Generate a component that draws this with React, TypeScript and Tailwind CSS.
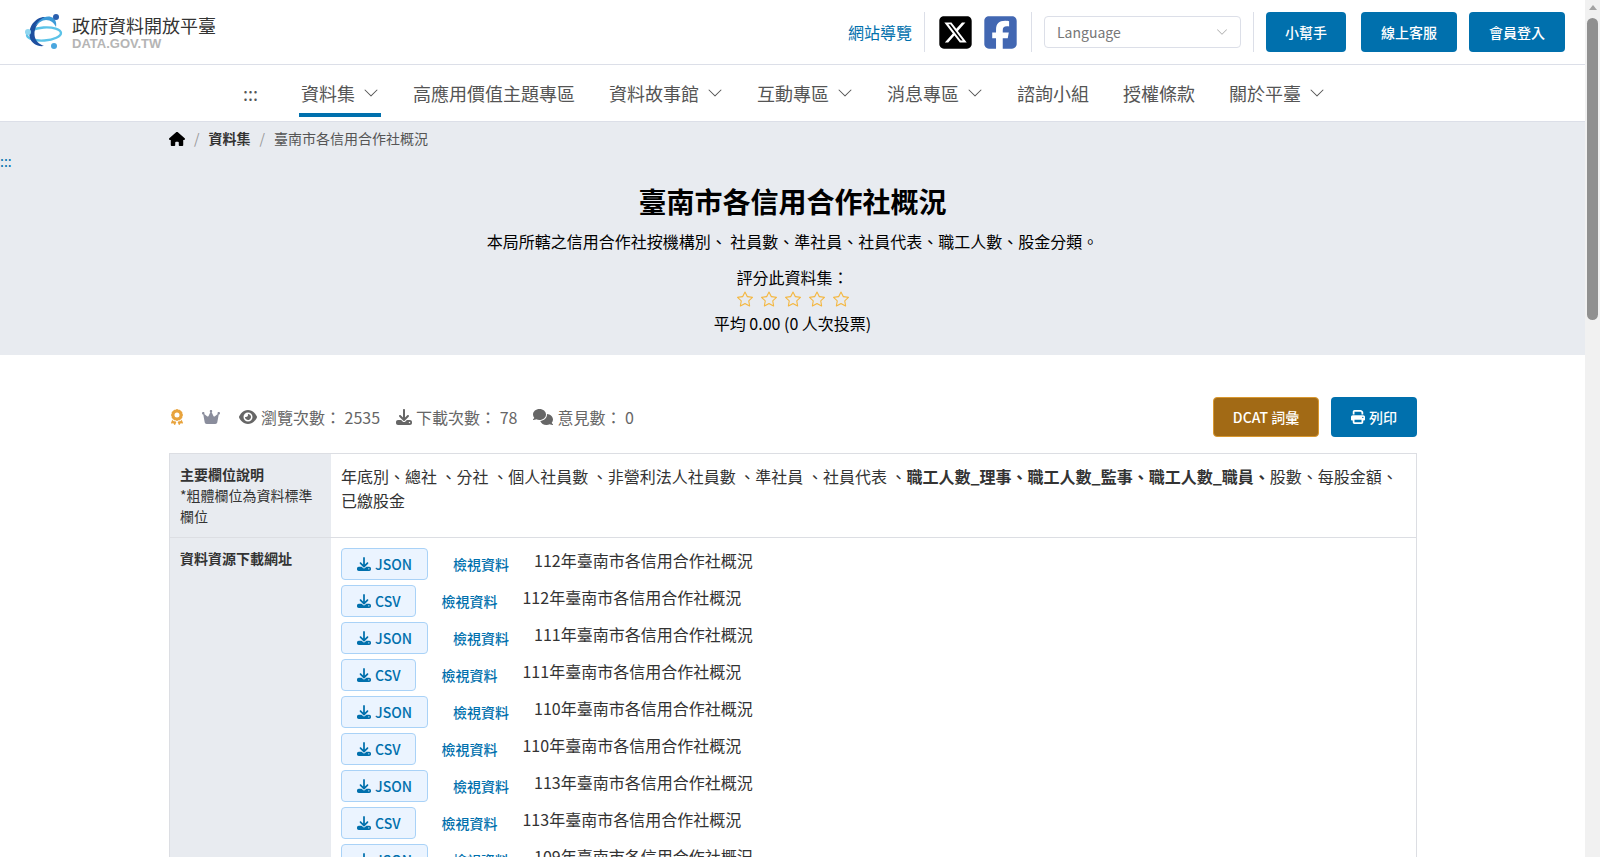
import { BsChevronDown, BsStar } from "react-icons/bs";
import {
  FaAward,
  FaCrown,
  FaDownload,
  FaEye,
  FaHouse,
  FaPrint,
  FaComments,
  FaSquareFacebook,
  FaSquareXTwitter,
} from "react-icons/fa6";

const navItems = [
  { label: "資料集", drop: true, active: true },
  { label: "高應用價值主題專區", drop: false },
  { label: "資料故事館", drop: true },
  { label: "互動專區", drop: true },
  { label: "消息專區", drop: true },
  { label: "諮詢小組", drop: false },
  { label: "授權條款", drop: false },
  { label: "關於平臺", drop: true },
];

const resources = [
  ["JSON", "112"],
  ["CSV", "112"],
  ["JSON", "111"],
  ["CSV", "111"],
  ["JSON", "110"],
  ["CSV", "110"],
  ["JSON", "113"],
  ["CSV", "113"],
  ["JSON", "109"],
];

function Logo() {
  return (
    <svg width="40" height="38" viewBox="0 0 40 38" className="shrink-0">
      <ellipse cx="20" cy="21" rx="17" ry="6.5" fill="none" stroke="#5cc3e8" strokeWidth="2.4" transform="rotate(-4 20 21)" />
      <path d="M22 4C12 3 3 14 6 25c1.500 5 7 9 14 8-5-2-9-5-9.500-11C10 14 15 8 22 4Z" fill="#1d4f9f" />
      <path d="M11 14C14 7 21 2 27 4c4 1 6 5 5 10-2-4-5-7-10-7-4 0-8 3-11 7Z" fill="#3d9bd8" />
      <circle cx="32" cy="4" r="3" fill="#2b5fae" />
      <circle cx="4" cy="19" r="3" fill="#8fd6f0" />
      <circle cx="30" cy="33" r="3" fill="#4aa6de" />
    </svg>
  );
}

function Header() {
  return (
    <header className="flex h-[65px] items-center justify-between border-b border-[#dcdfe8] pl-6 pr-5">
      <div className="flex items-center gap-2">
        <Logo />
        <div>
          <div className="text-[18px] leading-[22px] text-[#333]">政府資料開放平臺</div>
          <div className="font-['Liberation_Sans',sans-serif] text-[13px] leading-[15px] font-bold text-[#b5b5b5]">DATA.GOV.TW</div>
        </div>
      </div>
      <div className="flex items-center">
        <a className="text-[#0070ad]">網站導覽</a>
        <div className="ml-3 h-10 w-px bg-[#dcdfe8]" />
        <FaSquareXTwitter className="ml-3 size-[37px] text-black" />
        <FaSquareFacebook className="ml-[8px] size-[37px] text-[#4267b2]" />
        <div className="ml-3 h-10 w-px bg-[#dcdfe8]" />
        <div className="ml-3 flex h-8 w-[197px] items-center justify-between rounded border border-[#dcdfe8] pl-3 pr-3 text-[#777]">
          <span className="text-[14px]">Language</span>
          <BsChevronDown className="size-3 text-[#aaa]" />
        </div>
        <div className="ml-3 h-10 w-px bg-[#dcdfe8]" />
        <div className="ml-3 flex gap-3 text-[14px] font-medium text-white">
          <button className="h-10 w-20 rounded bg-[#0070ad]">小幫手</button>
          <button className="ml-[3px] h-10 w-24 rounded bg-[#0070ad]">線上客服</button>
          <button className="h-10 w-24 rounded bg-[#0070ad]">會員登入</button>
        </div>
      </div>
    </header>
  );
}

function Nav() {
  return (
    <nav className="flex h-[57px] items-center justify-center border-b border-[#dcdfe8] text-[18px] text-[#555]">
      <span className="mr-[26px] text-[#555]">:::</span>
      {navItems.map((item) => (
        <a key={item.label} className="relative mx-[17px] flex h-full items-center">
          {item.label}
          {item.drop && <BsChevronDown className="ml-2 size-4" />}
          {item.active && <span className="absolute -left-0.5 -right-0.5 bottom-1 h-1 bg-[#0070ad]" />}
        </a>
      ))}
    </nav>
  );
}

function Banner() {
  return (
    <section className="h-[233px] bg-[#e8ebf0]">
      <div className="flex items-center gap-[9px] pl-[169px] pt-[6px] text-[14px] leading-[21px] text-[#555]">
        <FaHouse className="size-4 text-black" />
        <span className="text-[#999]">/</span>
        <b className="text-[#333]">資料集</b>
        <span className="text-[#999]">/</span>
        <span>臺南市各信用合作社概況</span>
      </div>
      <div className="pt-[5px] text-[14px] leading-none text-[#0070ad]">:::</div>
      <div className="flex flex-col items-center text-black">
        <h1 className="mt-[12px] text-[28px] leading-[42px] font-bold">臺南市各信用合作社概況</h1>
        <p className="mt-[7px]">本局所轄之信用合作社按機構別、 社員數、準社員、社員代表、職工人數、股金分類。</p>
        <p className="mt-3">評分此資料集：</p>
        <div className="mt-[2px] flex gap-2 text-[#f4b740]">
          <BsStar className="size-4" />
          <BsStar className="size-4" />
          <BsStar className="size-4" />
          <BsStar className="size-4" />
          <BsStar className="size-4" />
        </div>
        <p className="mt-[4px]">平均 0.00 (0 人次投票)</p>
      </div>
    </section>
  );
}

function Stats() {
  return (
    <div className="flex items-center justify-between pt-[42px] pb-4">
      <div className="flex items-center text-[#666]">
        <FaAward className="size-[16px] text-[#e8a33d]" />
        <FaCrown className="ml-[17px] size-[18px] text-[#8a8d9c]" />
        <FaEye className="ml-[19px] size-[18px]" />
        <span className="ml-1">瀏覽次數： 2535</span>
        <FaDownload className="ml-4 size-[16px]" />
        <span className="ml-1">下載次數： 78</span>
        <FaComments className="ml-4 size-[20px]" />
        <span className="ml-1">意見數： 0</span>
      </div>
      <div className="flex gap-3 text-[14px] font-medium text-white">
        <button className="h-10 w-[106px] rounded border border-[#d9982f] bg-[#a26a15]">DCAT 詞彙</button>
        <button className="flex h-10 w-[86px] items-center justify-center gap-1 rounded bg-[#0070ad]">
          <FaPrint className="size-[14px]" />
          列印
        </button>
      </div>
    </div>
  );
}

function Resource({ format, year }: { format: string; year: string }) {
  return (
    <div className="mb-[5px] flex items-start">
      <a className="flex h-8 items-center gap-1 rounded border border-[#a9d2f7] bg-[#ebf4ff] px-[15px] text-[14px] font-medium text-[#0070ad]">
        <FaDownload className="size-[14px]" />
        {format}
      </a>
      <a className="ml-[25px] pt-[6px] text-[14px] leading-[21px] font-medium text-[#0070ad]">檢視資料</a>
      <span className="ml-[25px] text-[#333]">{year}年臺南市各信用合作社概況</span>
    </div>
  );
}

function Table() {
  return (
    <div className="border border-[#dcdee3]">
      <div className="flex border-b border-[#dcdee3]">
        <div className="w-[161px] shrink-0 bg-[#e8ebf0] px-[10px] py-[10px] text-[14px] leading-[21px] text-[#333]">
          <b>主要欄位說明</b>
          <br />
          *粗體欄位為資料標準欄位
        </div>
        <div className="min-w-0 flex-1 px-[10px] py-[10px] text-[#333]">
          年底別、總社 、分社 、個人社員數 、非營利法人社員數 、準社員 、社員代表 、
          <b>職工人數_理事、職工人數_監事、職工人數_職員、</b>
          股數、每股金額、已繳股金
        </div>
      </div>
      <div className="flex">
        <div className="w-[161px] shrink-0 bg-[#e8ebf0] px-[10px] py-[10px] text-[14px] leading-[21px] font-bold text-[#333]">
          資料資源下載網址
        </div>
        <div className="min-w-0 flex-1 px-[10px] py-[10px]">
          {resources.map(([format, year], i) => (
            <Resource key={i} format={format} year={year} />
          ))}
        </div>
      </div>
    </div>
  );
}

export default function App() {
  return (
    <div className="flex h-[857px] overflow-hidden bg-white font-['Noto_Sans_CJK_TC','Noto_Sans_CJK_JP',sans-serif] text-[16px] leading-6">
      <main className="min-w-0 flex-1">
        <Header />
        <Nav />
        <Banner />
        <div className="pl-[169px] pr-[168px]">
          <Stats />
          <Table />
        </div>
      </main>
      <div className="flex w-[15px] shrink-0 flex-col items-center bg-[#f1f1f1]">
        <div className="mt-[5px] h-0 w-0 border-x-[4px] border-b-[5px] border-x-transparent border-b-[#a3a3a3]" />
        <div className="mt-[8px] h-[302px] w-[11px] rounded-full bg-[#909090]" />
      </div>
    </div>
  );
}
